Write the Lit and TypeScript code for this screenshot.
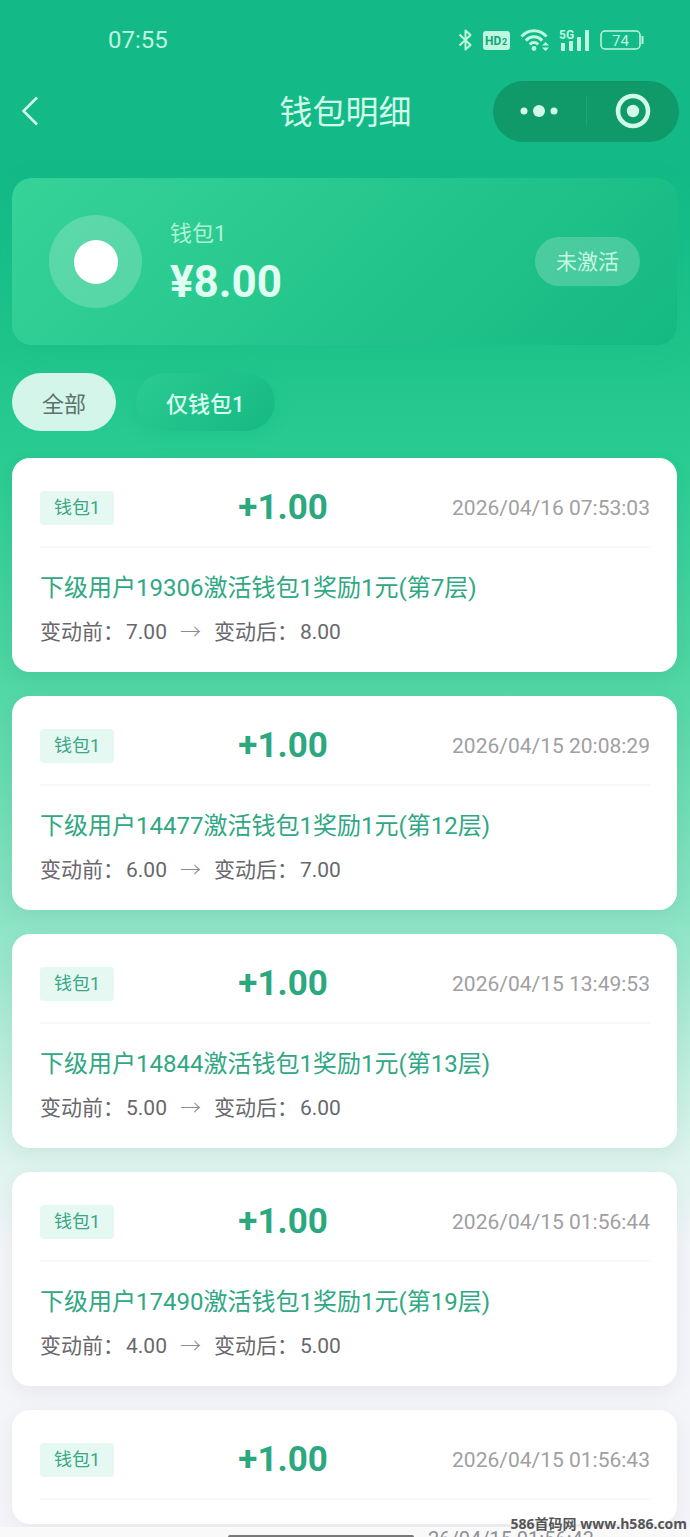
import { LitElement, html, css } from "lit";
import { customElement, property, state } from "lit/decorators.js";

interface Entry {
  amount: string;
  time: string;
  user: number;
  level: number;
  before: string;
  after: string;
}

const ENTRIES: Entry[] = [
  { amount: "+1.00", time: "2026/04/16 07:53:03", user: 19306, level: 7, before: "7.00", after: "8.00" },
  { amount: "+1.00", time: "2026/04/15 20:08:29", user: 14477, level: 12, before: "6.00", after: "7.00" },
  { amount: "+1.00", time: "2026/04/15 13:49:53", user: 14844, level: 13, before: "5.00", after: "6.00" },
  { amount: "+1.00", time: "2026/04/15 01:56:44", user: 17490, level: 19, before: "4.00", after: "5.00" },
];

const LAST = { amount: "+1.00", time: "2026/04/15 01:56:43" };

@customElement("status-bar")
class StatusBar extends LitElement {
  static styles = css`
    :host {
      display: flex;
      justify-content: space-between;
      align-items: center;
      height: 80px;
      padding: 0 46px 0 108px;
      color: #bdf7df;
      font-size: 24px;
    }
    .icons {
      display: flex;
      align-items: center;
      gap: 10px;
    }
    svg {
      display: block;
      fill: none;
      stroke: currentColor;
    }
    .fill {
      fill: currentColor;
      stroke: none;
    }
    text {
      fill: currentColor;
      stroke: none;
    }
    .dark {
      fill: #12a578;
    }
  `;

  render() {
    return html`
      <span>07:55</span>
      <div class="icons">
        <svg width="15" height="24" viewBox="0 0 15 24" stroke-width="2" stroke-linejoin="round">
          <path d="M1.5 6.5 12.5 17 7.5 21.5V2.5L12.5 7 1.5 17.5" />
        </svg>
        <svg width="27" height="20" viewBox="0 0 27 20">
          <rect class="fill" width="27" height="19" y="1" rx="3" />
          <text class="dark" x="2" y="15" font-size="12" font-weight="700">HD</text>
          <text class="dark" x="19" y="15" font-size="9" font-weight="700">2</text>
        </svg>
        <svg width="29" height="24" viewBox="0 0 29 24" stroke-width="3">
          <path d="M1.5 8.5C8.5 .8 19.5 .8 26.5 8.5M5.800 12.600c4.800-5 11.600-5 16.400 0M9.800 16.500c2.400-2.600 6-2.600 8.400 0" />
          <circle class="fill" cx="14" cy="20.5" r="2.4" />
          <path class="fill" d="m22 17.5 3.5-3.5 3.5 3.5zM22 19.5l3.5 3.5 3.5-3.5z" />
        </svg>
        <svg width="31" height="24" viewBox="0 0 31 24">
          <text x="0" y="11" font-size="12" font-weight="700">5G</text>
          <path class="fill" d="M2 15h4v8H2zM10 13h4v10h-4zM18 9h4v14h-4zM26 2h4v21h-4z" />
        </svg>
        <svg width="44" height="20" viewBox="0 0 44 20" stroke-width="1.5">
          <rect x="1" y="1" width="39" height="18" rx="4" />
          <path d="M42.5 6v8" stroke-width="2" />
          <text x="20.5" y="15.5" font-size="15" text-anchor="middle">74</text>
        </svg>
      </div>
    `;
  }
}

@customElement("wallet-nav")
class WalletNav extends LitElement {
  static styles = css`
    :host {
      display: grid;
      grid-template-columns: 1fr auto 1fr;
      align-items: center;
      height: 62px;
      padding: 0 11px 0 12px;
      color: #d2faea;
    }
    button {
      border: 0;
      padding: 0;
      background: none;
      color: inherit;
      display: grid;
      place-items: center;
    }
    .back {
      width: 36px;
      height: 44px;
    }
    h1 {
      margin: 0;
      padding-top: 4px;
      font-size: 33px;
      line-height: 48px;
      font-weight: 400;
    }
    .capsule {
      justify-self: end;
      display: grid;
      grid-template-columns: 1fr 1px 1fr;
      align-items: center;
      width: 186px;
      height: 61px;
      border-radius: 31px;
      background: #109969;
    }
    .capsule button {
      height: 61px;
    }
    .rule {
      height: 30px;
      background: #18a676;
    }
  `;

  render() {
    return html`
      <button class="back" aria-label="返回">
        <svg width="18" height="30" viewBox="0 0 18 30" fill="none" stroke="currentColor" stroke-width="2.5">
          <path d="M16 1.5 2.5 15 16 28.5" />
        </svg>
      </button>
      <h1>钱包明细</h1>
      <div class="capsule">
        <button aria-label="更多">
          <svg width="38" height="14" viewBox="0 0 38 14" fill="currentColor">
            <circle cx="4" cy="7" r="3.5" />
            <circle cx="19" cy="7" r="6" />
            <circle cx="34" cy="7" r="3.5" />
          </svg>
        </button>
        <span class="rule"></span>
        <button aria-label="关闭">
          <svg width="36" height="36" viewBox="0 0 36 36" fill="none" stroke="currentColor">
            <circle cx="18" cy="18" r="15" stroke-width="4.5" />
            <circle cx="18" cy="18" r="6.2" fill="currentColor" stroke="none" />
          </svg>
        </button>
      </div>
    `;
  }
}

@customElement("record-card")
class RecordCard extends LitElement {
  @property({ attribute: false }) entry!: Partial<Entry>;

  static styles = css`
    :host {
      display: block;
      padding: 0 27px 24px 28px;
      border-radius: 18px;
      background: #fff;
      box-shadow: 0 6px 20px rgba(40, 50, 80, 0.07);
    }
    header {
      display: flex;
      align-items: center;
      justify-content: space-between;
      padding: 24px 0 12px;
      border-bottom: 2px solid #f7f8f9;
    }
    .tag {
      padding: 0 14px;
      border-radius: 4px;
      background: #e6f8f2;
      color: #3aa785;
      font-size: 18px;
      line-height: 34px;
    }
    .amount {
      color: #2ba880;
      font-size: 35px;
      line-height: 52px;
      font-weight: 700;
    }
    time {
      color: #a0a0a2;
      font-size: 21px;
      line-height: 32px;
    }
    .title {
      margin: 20px 0 0;
      color: #2fa883;
      font-size: 24px;
      line-height: 40px;
    }
    .change {
      display: flex;
      gap: 13px;
      margin: 8px 0 0;
      color: #68686c;
      font-size: 21px;
      line-height: 32px;
    }
    .pair {
      display: flex;
      gap: 2px;
    }
    .arrow {
      color: #8c8c90;
      font-weight: 300;
    }
  `;

  render() {
    const e = this.entry;
    return html`
      <header>
        <span class="tag">钱包1</span>
        <span class="amount">${e.amount}</span>
        <time>${e.time}</time>
      </header>
      ${e.user === undefined
        ? ""
        : html`
            <p class="title">下级用户${e.user}激活钱包1奖励1元(第${e.level}层)</p>
            <p class="change">
              <span class="pair"><span>变动前：</span><span>${e.before}</span></span>
              <span class="arrow">→</span>
              <span class="pair"><span>变动后：</span><span>${e.after}</span></span>
            </p>
          `}
    `;
  }
}

@customElement("app-root")
class AppRoot extends LitElement {
  @state() private filter = "all";

  static styles = css`
    :host {
      display: block;
      position: relative;
      height: 100vh;
      overflow: hidden;
      font-family: Roboto, "Noto Sans CJK SC", sans-serif;
      background: linear-gradient(
        180deg,
        #13b986 0%,
        #13b986 11%,
        #1fc48b 22%,
        #29cc92 30%,
        #4fd6a4 44%,
        #8ce4c5 60%,
        #d6f3ea 74%,
        #f3f5f8 81%,
        #f5f5f9 100%
      );
    }
    main {
      padding: 36px 13px 0 12px;
    }
    .balance {
      display: flex;
      align-items: center;
      gap: 28px;
      height: 167px;
      box-sizing: border-box;
      padding: 0 37px;
      border-radius: 20px;
      background: linear-gradient(135deg, #36d399 0%, #14b981 100%);
      box-shadow: 0 8px 24px rgba(16, 185, 129, 0.3);
      color: #e0fff2;
    }
    .disc {
      display: grid;
      place-items: center;
      width: 93px;
      height: 93px;
      border-radius: 50%;
      background: rgba(255, 255, 255, 0.2);
    }
    .disc::before {
      content: "";
      width: 44px;
      height: 44px;
      border-radius: 50%;
      background: #fff;
    }
    .sum {
      flex: 1;
    }
    .sum p {
      margin: 0;
    }
    .label {
      color: #b0f3d5;
      font-size: 22px;
      line-height: 40px;
    }
    .total {
      font-size: 44px;
      line-height: 56px;
      font-weight: 700;
    }
    .badge {
      padding: 2px 21px 0;
      border-radius: 25px;
      background: rgba(255, 255, 255, 0.2);
      color: #c6f8e2;
      font-size: 21px;
      line-height: 47px;
    }
    nav {
      display: flex;
      gap: 20px;
      padding: 28px 0 27px;
    }
    .tab {
      border: 0;
      height: 58px;
      padding: 0 30px;
      border-radius: 29px;
      font: inherit;
      font-size: 22px;
      background: #d4f5e9;
      color: #5d716b;
    }
    .tab.strong {
      background: linear-gradient(135deg, #2acb92, #15b982);
      box-shadow: 0 4px 16px rgba(16, 185, 129, 0.3);
      color: #d8fdee;
      font-weight: 500;
    }
    .list {
      display: grid;
      gap: 24px;
    }
    .bottom {
      position: absolute;
      left: 0;
      right: 0;
      bottom: 0;
      height: 10px;
      overflow: hidden;
      background: #f9f9fa;
    }
    .home {
      position: absolute;
      left: 33%;
      bottom: 0;
      width: 27%;
      height: 2px;
      border-radius: 2px 2px 0 0;
      background: #777;
    }
    .ghost {
      position: absolute;
      right: 96px;
      top: 0;
      color: #8f8f92;
      font-size: 20px;
      line-height: 24px;
    }
    .mark {
      position: absolute;
      right: 3px;
      bottom: 4px;
      color: #555;
      font-family: "Open Sans", "Noto Sans CJK SC", sans-serif;
      font-size: 14px;
      line-height: 18px;
      font-weight: 700;
    }
  `;

  render() {
    return html`
      <status-bar></status-bar>
      <wallet-nav></wallet-nav>
      <main>
        <section class="balance">
          <div class="disc"></div>
          <div class="sum">
            <p class="label">钱包1</p>
            <p class="total">¥8.00</p>
          </div>
          <span class="badge">未激活</span>
        </section>
        <nav>
          <button class="tab" aria-pressed=${this.filter === "all"} @click=${() => (this.filter = "all")}>全部</button>
          <button class="tab strong" aria-pressed=${this.filter === "one"} @click=${() => (this.filter = "one")}>仅钱包1</button>
        </nav>
        <div class="list">
          ${ENTRIES.map((e) => html`<record-card .entry=${e}></record-card>`)}
          <record-card .entry=${LAST}></record-card>
        </div>
      </main>
      <div class="bottom">
        <span class="ghost">26/04/15 01:56:43</span>
        <span class="home"></span>
      </div>
      <span class="mark">586首码网 www.h586.com</span>
    `;
  }
}
